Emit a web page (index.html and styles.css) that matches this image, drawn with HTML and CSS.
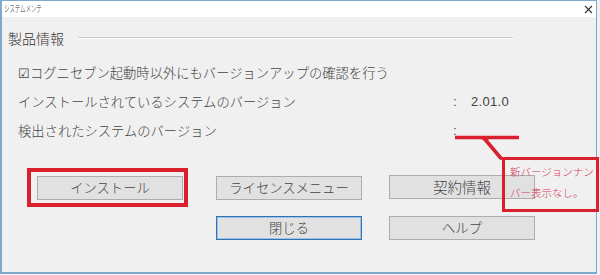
FILE: index.html
```html
<!DOCTYPE html>
<html lang="ja">
<head>
    <meta charset="UTF-8">
    <title>システムメンテ</title>
    <link rel="stylesheet" href="styles.css">
</head>
<body>

    <div class="window">
        <div class="titlebar">
            <span class="title">システムメンテ</span>
            <svg class="close" width="9" height="9" viewBox="0 0 9 9">
                <path d="M1 1 L8 8 M8 1 L1 8" stroke="#333" stroke-width="1.1" fill="none"/>
            </svg>
        </div>

        <div class="content">
            <div class="group-title">
                <span class="group-name">製品情報</span>
                <span class="group-line"></span>
            </div>

            <div class="info">
                <div class="info-row">
                    <span class="label">☑コグニセブン起動時以外にもバージョンアップの確認を行う</span>
                </div>
                <div class="info-row">
                    <span class="label">インストールされているシステムのバージョン</span>
                    <span class="value"><span class="colon">:</span>2.01.0</span>
                </div>
                <div class="info-row">
                    <span class="label">検出されたシステムのバージョン</span>
                    <span class="value"><span class="colon">:</span></span>
                </div>
            </div>

            <div class="buttons">
                <div class="cell">
                    <button class="btn">インストール</button>
                    <span class="highlight"></span>
                </div>
                <div class="cell"><button class="btn">ライセンスメニュー</button></div>
                <div class="cell"><button class="btn btn-wide">契約情報</button></div>
                <div class="cell"></div>
                <div class="cell"><button class="btn btn-default">閉じる</button></div>
                <div class="cell"><button class="btn">ヘルプ</button></div>
            </div>
        </div>

        <!-- annotation -->
        <svg class="pointer" width="80" height="30" viewBox="0 0 80 30">
            <path d="M0 2.5 H64" stroke="#d9202c" stroke-width="3.5" fill="none"/>
            <path d="M24 2 L36 2 L33 5 L49 24 L45 25 L29 6 Z" fill="#d9202c"/>
        </svg>
        <div class="callout">新バージョンナン<br>バー表示なし。</div>
    </div>

</body>
</html>
```

FILE: styles.css
```css
body {
    margin: 0;
    padding: 0;
    background: #f0f0f0;
    font-family: 'Noto Sans CJK JP', 'Liberation Sans', sans-serif;
    font-weight: 300;
    color: #444;
}

.window {
    position: relative;
    width: 597px;
    height: 274px;
    box-sizing: border-box;
    border: 1px solid #7fa9cc;
    border-left-width: 2px;
    border-bottom-width: 2px;
    background: #f0f0f0;
}

.titlebar {
    height: 16px;
    background: #ffffff;
    display: flex;
    align-items: center;
    justify-content: space-between;
    padding: 0 3px 0 2px;
}

.title {
    display: inline-block;
    font-size: 9px;
    line-height: 16px;
    color: #222;
    transform: scaleX(0.6);
    transform-origin: left center;
}

.close {
    margin-top: 1px;
}

.content {
    padding: 0 0 0 6px;
}

.group-title {
    display: flex;
    align-items: center;
    margin-top: 12px;
    height: 18px;
}

.group-name {
    width: 70px;
    font-size: 14px;
    line-height: 18px;
    color: #333;
}

.group-line {
    width: 435px;
    height: 1px;
    background: #c9c9c9;
    border-bottom: 1px solid #fdfdfd;
}

.info {
    margin-top: 11px;
    padding-left: 10px;
}

.info-row {
    display: flex;
    height: 29px;
    align-items: center;
    font-size: 13.3px;
}

.label {
    width: 435px;
    line-height: 18px;
}

.value {
    font-family: 'Liberation Sans', sans-serif;
    font-size: 13px;
    letter-spacing: 0.3px;
}

.colon {
    display: inline-block;
    width: 18px;
}

.buttons {
    display: grid;
    grid-template-columns: 179px 173px 146px;
    row-gap: 16px;
    margin-top: 29px;
    padding-left: 29px;
}

.cell {
    position: relative;
    height: 24px;
}

.btn {
    width: 146px;
    height: 24px;
    padding: 0;
    background: #e1e1e1;
    border: 1px solid #adadad;
    font-family: 'Noto Sans CJK JP', sans-serif;
    font-weight: 300;
    font-size: 13.3px;
    color: #444;
    line-height: 20px;
}

.btn-wide {
    font-size: 14.5px;
}

.btn-default {
    border: 1px solid #2f72b4;
    box-shadow: inset 0 0 0 1px #9fc3e6;
}

.highlight {
    position: absolute;
    left: -10px;
    top: -6px;
    width: 161px;
    height: 39px;
    box-sizing: border-box;
    border: 4px solid #d9202c;
}

.pointer {
    position: absolute;
    left: 453px;
    top: 134px;
}

.callout {
    position: absolute;
    left: 500px;
    top: 156px;
    width: 97px;
    height: 55px;
    box-sizing: border-box;
    border: 3px solid #d9202c;
    padding: 1px 0 0 5px;
    font-size: 10.5px;
    line-height: 21px;
    color: #d2385a;
    white-space: nowrap;
}
```
